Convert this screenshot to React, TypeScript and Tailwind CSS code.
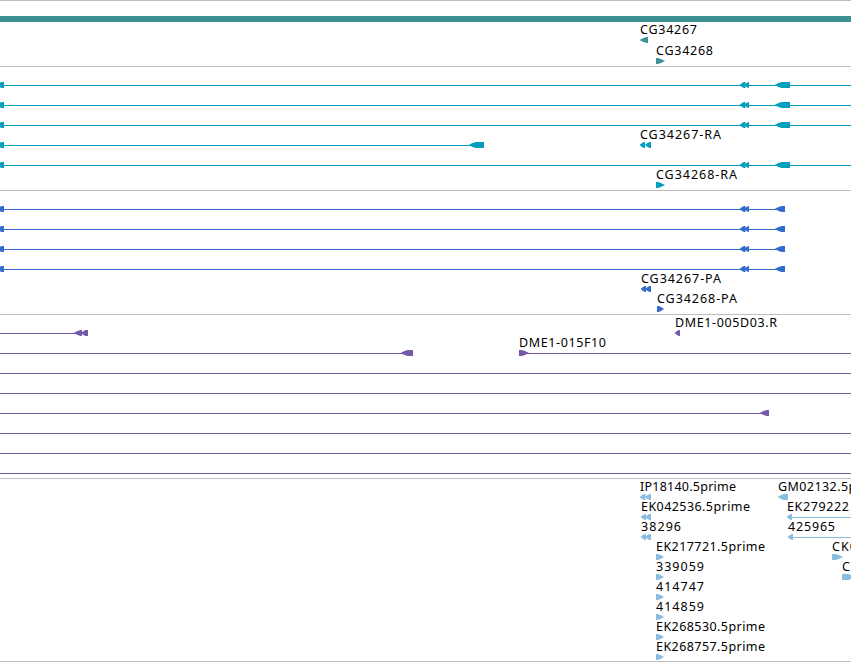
type Feature = { x: number; w: number; dir: "left" | "right"; tip?: number };
type Label = { x: number; text: string; width?: number };
type Row = {
  y: number;
  line?: [number, number];
  features?: Feature[];
  label?: Label;
};
type TrackData = { name: string; height: number; color: string; rows: Row[] };

const left = (x: number, w: number, tip = 5): Feature => ({ x, w, dir: "left", tip });
const right = (x: number, w: number, tip = 6): Feature => ({ x, w, dir: "right", tip });

const transcriptExons = [left(-3, 7), left(739.5, 6), left(744, 5), left(774.5, 15.5, 8)];
const proteinExons = [left(-3, 7), left(739.5, 6), left(744, 5), left(774.5, 10.5, 8)];

// y is the centre line of each row, measured from the top of its track
const tracks: TrackData[] = [
  {
    name: "genes",
    height: 65,
    color: "#3f9094",
    rows: [
      { y: 39, features: [left(639.5, 8.5, 8)], label: { x: 640, text: "CG34267", width: 57 } },
      { y: 60, features: [right(656, 9, 8)], label: { x: 656, text: "CG34268", width: 57 } },
    ],
  },
  {
    name: "transcripts",
    height: 123,
    color: "#049ebd",
    rows: [
      { y: 18, line: [0, 851], features: transcriptExons },
      { y: 38, line: [0, 851], features: transcriptExons },
      { y: 58, line: [0, 851], features: transcriptExons },
      { y: 78, line: [0, 470], features: [left(-3, 7), left(468.5, 15.5, 8)] },
      { y: 78, features: [left(639.5, 5.5), left(645, 6)], label: { x: 640, text: "CG34267-RA", width: 81 } },
      { y: 98, line: [0, 851], features: transcriptExons },
      { y: 118, features: [right(656, 9, 8)], label: { x: 656, text: "CG34268-RA", width: 81 } },
    ],
  },
  {
    name: "proteins",
    height: 123,
    color: "#336ccd",
    rows: [
      { y: 18, line: [0, 780], features: proteinExons },
      { y: 38, line: [0, 780], features: proteinExons },
      { y: 58, line: [0, 780], features: proteinExons },
      { y: 78, line: [0, 780], features: proteinExons },
      { y: 98, features: [left(640.5, 5.5), left(645, 6)], label: { x: 641, text: "CG34267-PA", width: 80 } },
      { y: 118, features: [right(657, 7)], label: { x: 657, text: "CG34268-PA", width: 80 } },
    ],
  },
  {
    name: "clones",
    height: 163,
    color: "#7659a8",
    rows: [
      { y: 18, line: [0, 76], features: [left(73.5, 8.5, 8), left(81, 7)] },
      { y: 18, features: [left(674.5, 5.5)], label: { x: 675, text: "DME1-005D03.R", width: 102 } },
      { y: 38, line: [0, 403], features: [left(400.5, 12.5, 8)] },
      { y: 38, line: [525, 851], features: [right(519, 10, 8)], label: { x: 519, text: "DME1-015F10", width: 87 } },
      { y: 58, line: [0, 851] },
      { y: 78, line: [0, 851] },
      { y: 98, line: [0, 765], features: [left(759.5, 9.5, 8)] },
      { y: 118, line: [0, 851] },
      { y: 138, line: [0, 851] },
      { y: 158, line: [0, 851] },
    ],
  },
  {
    name: "cdna",
    height: 182,
    color: "#8abede",
    rows: [
      { y: 18, features: [left(639.5, 6), left(645, 6)], label: { x: 640, text: "IP18140.5prime", width: 96 } },
      { y: 18, features: [left(777.5, 10.5, 7)], label: { x: 778, text: "GM02132.5prime", width: 107 } },
      { y: 38, features: [left(640.5, 5.5), left(645, 6)], label: { x: 641, text: "EK042536.5prime", width: 109 } },
      { y: 38, line: [790, 851], features: [left(786.5, 5.5)], label: { x: 787, text: "EK279222", width: 62 } },
      { y: 58, features: [left(640.5, 5.5), left(645, 6)], label: { x: 641, text: "38296", width: 40 } },
      { y: 58, line: [791, 851], features: [left(787.5, 5.5)], label: { x: 788, text: "425965", width: 47 } },
      { y: 78, features: [right(656, 8, 7)], label: { x: 656, text: "EK217721.5prime", width: 109 } },
      { y: 78, features: [right(832, 11, 8)], label: { x: 832, text: "CK0", width: 25 } },
      { y: 98, features: [right(656, 8, 7)], label: { x: 656, text: "339059", width: 48 } },
      { y: 98, features: [right(842, 12)], label: { x: 842, text: "C" } },
      { y: 118, features: [right(656, 8, 7)], label: { x: 656, text: "414747", width: 48 } },
      { y: 138, features: [right(656, 8, 7)], label: { x: 656, text: "414859", width: 48 } },
      { y: 158, features: [right(656, 8, 7)], label: { x: 656, text: "EK268530.5prime", width: 109 } },
      { y: 178, features: [right(656, 8, 7)], label: { x: 656, text: "EK268757.5prime", width: 109 } },
    ],
  },
];

function arrowPoints({ x, w, dir, tip = 5 }: Feature, y: number) {
  const end = x + w;
  // the head bulges a little before it reaches full height
  const outline = [
    [0, 0],
    [tip * 0.5, -1.9],
    [tip * 0.9, -3],
    [w, -3],
    [w, 3],
    [tip * 0.9, 3],
    [tip * 0.5, 1.9],
  ];
  return outline
    .map(([dx, dy]) => `${dir === "left" ? x + dx : end - dx},${y + dy}`)
    .join(" ");
}

function Track({ track }: { track: TrackData }) {
  return (
    <div className="border-t border-[#bebebe]">
      <svg className="block" width={851} height={track.height} fill={track.color}>
        {track.name === "genes" && <rect x={0} y={15} width={851} height={6} />}
        {track.rows.map((row, i) => (
          <g key={i}>
            {row.line && (
              <rect x={row.line[0]} y={row.y} width={row.line[1] - row.line[0]} height={1} />
            )}
            {row.features?.map((feature, j) => (
              <polygon key={j} points={arrowPoints(feature, row.y)} />
            ))}
            {row.label && (
              <text
                x={row.label.x}
                y={row.y - 6}
                textLength={row.label.width}
                className="fill-black font-['Noto_Sans','DejaVu_Sans',sans-serif] text-[12.5px]"
              >
                {row.label.text}
              </text>
            )}
          </g>
        ))}
      </svg>
    </div>
  );
}

export default function App() {
  return (
    <div className="w-[851px] h-[662px] overflow-hidden bg-white border-b border-[#bebebe]">
      {tracks.map((track) => (
        <Track key={track.name} track={track} />
      ))}
    </div>
  );
}
